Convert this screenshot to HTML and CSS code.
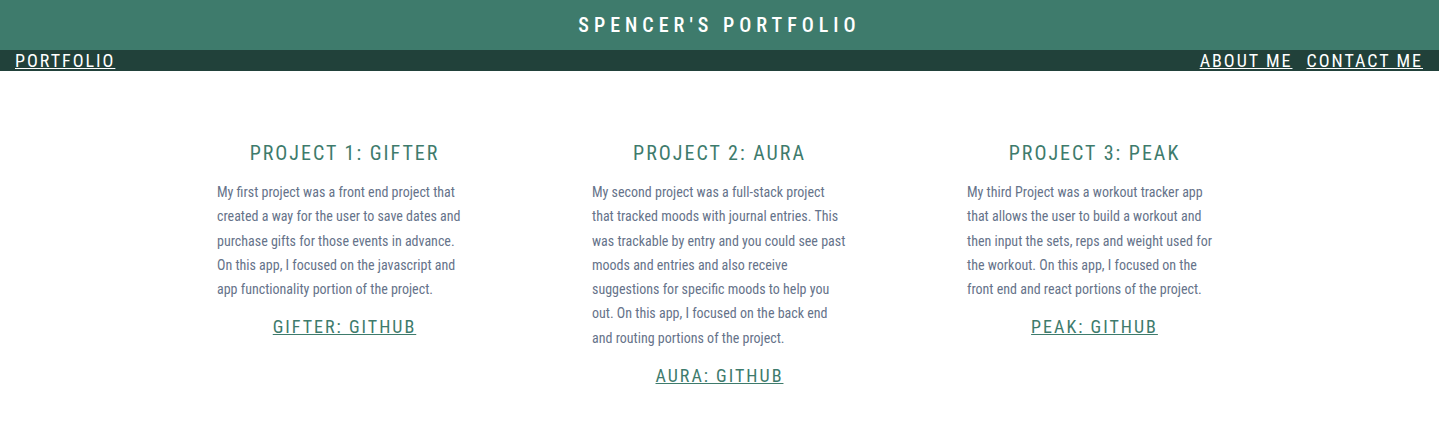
FILE: index.html
```html
<!DOCTYPE html>
<html lang="en">
<head>
<meta charset="utf-8">
<title>Spencer's Portfolio</title>
<link rel="stylesheet" href="styles.css">
</head>
<body>
<header class="site-header">
  <h1 class="site-title">SPENCER'S PORTFOLIO</h1>
  <nav class="site-nav">
    <a class="nav-link" href="#">PORTFOLIO</a>
    <div class="nav-right">
      <a class="nav-link" href="#">ABOUT ME</a>
      <a class="nav-link" href="#">CONTACT ME</a>
    </div>
  </nav>
</header>
<main class="projects">
  <section class="project">
    <h2 class="project-title">PROJECT 1: GIFTER</h2>
    <p class="project-text">My first project was a front end project that created a way for the user to save dates and purchase gifts for those events in advance. On this app, I focused on the javascript and app functionality portion of the project.</p>
    <a class="project-link" href="#">GIFTER: GITHUB</a>
  </section>
  <section class="project">
    <h2 class="project-title">PROJECT 2: AURA</h2>
    <p class="project-text">My second project was a full-stack project that tracked moods with journal entries. This was trackable by entry and you could see past moods and entries and also receive suggestions for specific moods to help you out. On this app, I focused on the back end and routing portions of the project.</p>
    <a class="project-link" href="#">AURA: GITHUB</a>
  </section>
  <section class="project">
    <h2 class="project-title">PROJECT 3: PEAK</h2>
    <p class="project-text">My third Project was a workout tracker app that allows the user to build a workout and then input the sets, reps and weight used for the workout. On this app, I focused on the front end and react portions of the project.</p>
    <a class="project-link" href="#">PEAK: GITHUB</a>
  </section>
</main>
</body>
</html>
```
FILE: styles.css
```css
* { box-sizing: border-box; }
body {
  margin: 0;
  font-family: "Roboto Condensed", Roboto, sans-serif;
  background: #ffffff;
}
.site-header {
  display: flex;
  flex-direction: column;
}
.site-title {
  margin: 0;
  height: 50px;
  background: #3e7b6c;
  color: #ffffff;
  font-size: 20px;
  font-weight: 500;
  letter-spacing: 5px;
  line-height: 50px;
  text-align: center;
}
.site-nav {
  height: 21px;
  background: #21413a;
  display: flex;
  justify-content: space-between;
  align-items: center;
  padding: 0 16px 0 15px;
}
.nav-right {
  display: flex;
  gap: 14px;
}
.nav-link {
  color: #ffffff;
  font-size: 18px;
  letter-spacing: 2px;
  line-height: 21px;
  text-decoration: underline;
}
.projects {
  display: flex;
  justify-content: center;
  align-items: flex-start;
  padding-top: 70px;
}
.project {
  width: 375px;
  display: flex;
  flex-direction: column;
  align-items: center;
}
.project-title {
  margin: 0;
  color: #3e7b6c;
  font-size: 20px;
  font-weight: 400;
  letter-spacing: 2px;
  line-height: 24px;
}
.project-text {
  margin: 15px 0 0;
  width: 255px;
  color: #66738a;
  font-size: 14px;
  line-height: 24.3px;
}
.project-link {
  margin-top: 14px;
  color: #3e7b6c;
  font-size: 18px;
  letter-spacing: 2px;
  line-height: 24px;
  text-decoration: underline;
}
```
